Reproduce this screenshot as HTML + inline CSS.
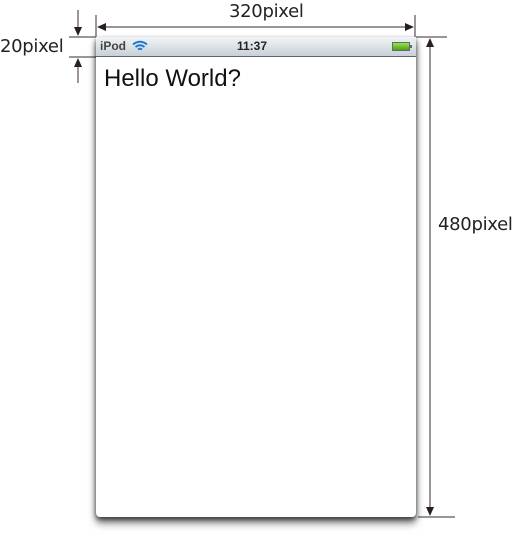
<!DOCTYPE html>
<html><head><style>
body{margin:0;width:513px;height:540px;background:#fff;position:relative;overflow:hidden;font-family:"Liberation Sans",sans-serif}
.lbl{position:absolute;font-size:18px;color:#222;font-family:"DejaVu Sans","Liberation Sans",sans-serif;letter-spacing:-0.3px}
#phone{position:absolute;left:96px;top:37px;width:320px;height:480px;background:#fff;border-radius:0 0 4px 4px;box-shadow:0 6px 8px rgba(0,0,0,.55),-1px 2px 4px rgba(0,0,0,.3),1px 2px 4px rgba(0,0,0,.3)}
#bar{height:19px;background:linear-gradient(#f1f4f6,#c9d0d6);border-bottom:1px solid #5d6670;position:relative;font-size:12px;font-weight:bold;color:#333}
</style></head><body>
<svg width="513" height="540" style="position:absolute;left:0;top:0" stroke="#7a7272" stroke-width="1.5" fill="#2a1f1f">
<line x1="96" y1="15" x2="96" y2="37"/><line x1="415" y1="15" x2="415" y2="37"/>
<line x1="100" y1="27" x2="410" y2="27"/>
<polygon points="97,27 106,23 106,31" stroke="none"/><polygon points="414,27 405,23 405,31" stroke="none"/>
<line x1="69" y1="37" x2="96" y2="37"/><line x1="69" y1="57" x2="96" y2="57"/>
<line x1="78" y1="10" x2="78" y2="33"/><line x1="78" y1="61" x2="78" y2="83"/>
<polygon points="78,36 74,27 82,27" stroke="none"/><polygon points="78,58 74,67 82,67" stroke="none"/>
<line x1="416" y1="37" x2="447" y2="37"/><line x1="418" y1="517" x2="455" y2="517"/>
<line x1="430" y1="42" x2="430" y2="512"/>
<polygon points="430,38 426,47 434,47" stroke="none"/><polygon points="430,516 426,507 434,507" stroke="none"/>
</svg>
<div class="lbl" style="left:229px;top:1px">320pixel</div>
<div class="lbl" style="left:0;top:36px">20pixel</div>
<div class="lbl" style="left:438px;top:214px">480pixel</div>
<div id="phone">
<div id="bar">
<span style="position:absolute;left:4px;top:2px;color:#444">iPod</span>
<svg style="position:absolute;left:36px;top:3px" width="16" height="12" viewBox="0 0 16 12" fill="none" stroke="#1b7ad8" stroke-width="2"><path d="M1 4.5Q8 -1 15 4.5"/><path d="M3.5 7Q8 3.5 12.5 7"/><path d="M6 9.5Q8 8 10 9.5"/></svg>
<span style="position:absolute;left:141px;top:2px;color:#222">11:37</span>
<div style="position:absolute;left:296px;top:5px;width:16px;height:7px;border:1px solid #667;background:linear-gradient(#9be44a,#4aa312)"></div>
<div style="position:absolute;left:314px;top:8px;width:2px;height:3px;background:#667"></div>
</div>
<div style="position:absolute;left:8px;top:28px;font-size:24px;color:#111">Hello World?</div>
</div>
</body></html>
